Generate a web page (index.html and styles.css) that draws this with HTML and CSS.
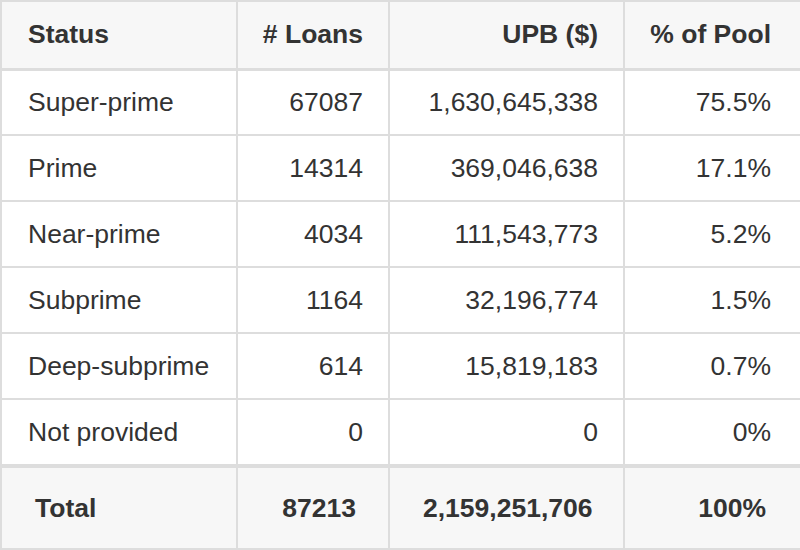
FILE: index.html
```html
<!DOCTYPE html>
<html>
<head>
<meta charset="utf-8">
<link rel="stylesheet" href="styles.css">
</head>
<body>
<table class="pool">
  <colgroup>
    <col class="c1"><col class="c2"><col class="c3"><col class="c4">
  </colgroup>
  <thead>
    <tr class="head">
      <th class="left">Status</th>
      <th class="right"># Loans</th>
      <th class="right">UPB ($)</th>
      <th class="right end">% of Pool</th>
    </tr>
  </thead>
  <tbody>
    <tr class="row"><td class="left">Super-prime</td><td class="right">67087</td><td class="right">1,630,645,338</td><td class="right end">75.5%</td></tr>
    <tr class="row"><td class="left">Prime</td><td class="right">14314</td><td class="right">369,046,638</td><td class="right end">17.1%</td></tr>
    <tr class="row"><td class="left">Near-prime</td><td class="right">4034</td><td class="right">111,543,773</td><td class="right end">5.2%</td></tr>
    <tr class="row"><td class="left">Subprime</td><td class="right">1164</td><td class="right">32,196,774</td><td class="right end">1.5%</td></tr>
    <tr class="row"><td class="left">Deep-subprime</td><td class="right">614</td><td class="right">15,819,183</td><td class="right end">0.7%</td></tr>
    <tr class="row last"><td class="left">Not provided</td><td class="right">0</td><td class="right">0</td><td class="right end">0%</td></tr>
  </tbody>
  <tfoot>
    <tr class="total">
      <td class="left">Total</td>
      <td class="right">87213</td>
      <td class="right">2,159,251,706</td>
      <td class="right end">100%</td>
    </tr>
  </tfoot>
</table>
</body>
</html>
```
FILE: styles.css
```css
html, body {
  margin: 0;
  padding: 0;
  background: #ffffff;
}
.pool {
  width: 800px;
  border-collapse: collapse;
  table-layout: fixed;
  font-family: "Liberation Sans", Arial, sans-serif;
  font-size: 26.5px;
  color: #333333;
  border: 2px solid #dddddd;
}
.c1 { width: 236px; }
.c2 { width: 152px; }
.c3 { width: 235px; }
.c4 { width: 177px; }
.pool th, .pool td {
  border: 2px solid #dddddd;
  padding: 0 25px 0 26px;
  vertical-align: middle;
  white-space: nowrap;
}
.pool th {
  font-weight: bold;
  background: #f7f7f7;
}
.pool th.right { padding-left: 8px; }
.pool .end { padding-right: 29px; }
.head { height: 68px; }
.head th { border-bottom: 3px solid #dddddd; }
.row { height: 66px; }
.row.last { height: 67px; }
.total { height: 83px; }
.total td {
  font-weight: bold;
  background: #f7f7f7;
  border-top: 4px solid #dddddd;
  padding: 0 32px 0 33px;
}
.pool .total td.end { padding-right: 34px; }
.left { text-align: left; }
.right { text-align: right; }
```
